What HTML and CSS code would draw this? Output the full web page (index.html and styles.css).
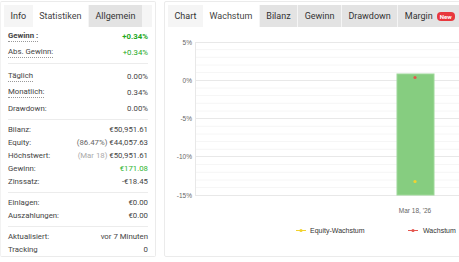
FILE: index.html
```html
<!doctype html>
<html>
<head>
    <title>Statistiken</title>
<link rel="stylesheet" href="styles.css">
</head>
<body>
    <div class="container">
        <div class="stats-panel">
            <div class="tab-bar">
                <span class="tab-title">Info</span>
                <span class="tab active">Statistiken</span>
                <span class="tab">Allgemein</span>
            </div>
            <div class="section first">
                <div class="row tall"><span class="label dotted bold">Gewinn :</span><span class="value gain bold">+0.34%</span></div>
                <div class="row tall"><span class="label dotted">Abs. Gewinn:</span><span class="value gain">+0.34%</span></div>
            </div>
            <div class="section mid">
                <div class="row tall"><span class="label dotted">Täglich</span><span class="value">0.00%</span></div>
                <div class="row tall"><span class="label dotted">Monatlich:</span><span class="value">0.34%</span></div>
                <div class="row tall"><span class="label">Drawdown:</span><span class="value">0.00%</span></div>
            </div>
            <div class="section">
                <div class="row"><span class="label">Bilanz:</span><span class="value">€50,951.61</span></div>
                <div class="row"><span class="label">Equity:</span><span class="value"><span class="note">(86.47%)</span> €44,057.63</span></div>
                <div class="row"><span class="label">Höchstwert:</span><span class="value"><span class="note light">(Mar 18)</span> €50,951.61</span></div>
                <div class="row"><span class="label">Gewinn:</span><span class="value money">€171.08</span></div>
                <div class="row"><span class="label">Zinssatz:</span><span class="value">-€18.45</span></div>
            </div>
            <div class="section">
                <div class="row"><span class="label">Einlagen:</span><span class="value">€0.00</span></div>
                <div class="row"><span class="label">Auszahlungen:</span><span class="value">€0.00</span></div>
            </div>
            <div class="section last">
                <div class="row"><span class="label">Aktualisiert:</span><span class="value">vor 7 Minuten</span></div>
                <div class="row"><span class="label">Tracking</span><span class="value">0</span></div>
            </div>
        </div>

        <div class="chart-panel">
            <div class="tab-bar">
                <span class="tab-title">Chart</span>
                <span class="tab active">Wachstum</span>
                <span class="tab">Bilanz</span>
                <span class="tab">Gewinn</span>
                <span class="tab">Drawdown</span>
                <span class="tab">Margin <span class="badge">New</span></span>
            </div>
            <svg class="chart" width="300" height="229" viewBox="0 0 300 229">
                <!-- minor grid -->
                <g stroke="#f6f6f6" stroke-width="1">
                    <line x1="30" y1="22.7" x2="300" y2="22.7"/>
                    <line x1="30" y1="30.3" x2="300" y2="30.3"/>
                    <line x1="30" y1="38" x2="300" y2="38"/>
                    <line x1="30" y1="45.6" x2="300" y2="45.6"/>
                    <line x1="30" y1="61" x2="300" y2="61"/>
                    <line x1="30" y1="68.6" x2="300" y2="68.6"/>
                    <line x1="30" y1="76.3" x2="300" y2="76.3"/>
                    <line x1="30" y1="84" x2="300" y2="84"/>
                    <line x1="30" y1="99.3" x2="300" y2="99.3"/>
                    <line x1="30" y1="107" x2="300" y2="107"/>
                    <line x1="30" y1="114.6" x2="300" y2="114.6"/>
                    <line x1="30" y1="122.3" x2="300" y2="122.3"/>
                    <line x1="30" y1="137.6" x2="300" y2="137.6"/>
                    <line x1="30" y1="145.3" x2="300" y2="145.3"/>
                    <line x1="30" y1="153" x2="300" y2="153"/>
                    <line x1="30" y1="160.6" x2="300" y2="160.6"/>
                </g>
                <!-- major grid -->
                <g stroke="#e8e8e8" stroke-width="1">
                    <line x1="30" y1="15.5" x2="300" y2="15.5"/>
                    <line x1="30" y1="53.5" x2="300" y2="53.5"/>
                    <line x1="30" y1="91.5" x2="300" y2="91.5"/>
                    <line x1="30" y1="129.5" x2="300" y2="129.5"/>
                    <line x1="30" y1="168.5" x2="300" y2="168.5"/>
                    <line x1="30.5" y1="15" x2="30.5" y2="168"/>
                </g>
                <g class="axis-label" text-anchor="end">
                    <text x="27" y="17.5">5%</text>
                    <text x="27" y="55.5">0%</text>
                    <text x="27" y="93.5">-5%</text>
                    <text x="27" y="131.5">-10%</text>
                    <text x="27" y="170.5">-15%</text>
                </g>
                <rect x="232" y="47" width="37" height="121" fill="#86cd80" stroke="#9ed899" stroke-width="1"/>
                <circle cx="250" cy="50.5" r="1.6" fill="#e5554d"/>
                <circle cx="250" cy="154.5" r="1.6" fill="#f2d22e"/>
                <text class="axis-label" x="250" y="186" text-anchor="middle">Mar 18, '26</text>
                <g class="legend">
                    <line x1="131" y1="203.5" x2="141" y2="203.5" stroke="#f2d22e" stroke-width="1"/>
                    <circle cx="136" cy="203.5" r="1.6" fill="#f2d22e"/>
                    <text x="145" y="206">Equity-Wachstum</text>
                    <line x1="243" y1="203.5" x2="253" y2="203.5" stroke="#e5554d" stroke-width="1"/>
                    <circle cx="248" cy="203.5" r="1.6" fill="#e5554d"/>
                    <text x="258" y="206">Wachstum</text>
                </g>
            </svg>
        </div>
    </div>
</body>
</html>
```

FILE: styles.css
```css
    body {
        margin: 0;
        background-color: #fff;
        font-family: Roboto, "Liberation Sans", sans-serif;
        color: #444;
        overflow: hidden;
    }
    .container {
        display: flex;
        align-items: flex-start;
        gap: 8px;
        padding-top: 1px;
        width: 470px;
    }
    .stats-panel {
        width: 148px;
        flex: none;
        border: 1px solid #ebebeb;
        border-left-color: #f2f2f2;
        padding: 3px 3px 0 3px;
        border-radius: 2px;
    }
    .chart-panel {
        width: 300px;
        flex: none;
        border: 1px solid #ebebeb;
        padding: 3px 0 0 3px;
        border-radius: 2px;
    }
    .tab-bar {
        display: flex;
        height: 22px;
        background-color: #f5f5f5;
        font-size: 9px;
        color: #333;
    }
    .tab-title,
    .tab {
        display: flex;
        align-items: center;
        padding: 0 6.5px;
        white-space: nowrap;
    }
    .tab {
        background-color: #e3e3e3;
        margin-left: 1px;
    }
    .tab.active {
        background-color: #fff;
        margin-left: 0;
        color: #444;
    }
    .badge {
        margin-left: 4px;
        background-color: #e8383d;
        color: #fff;
        font-size: 6px;
        font-weight: bold;
        border-radius: 4px;
        padding: 1px 3px;
    }
    .section {
        margin: 0 4px;
        padding: 3px 0 4px;
        border-bottom: 1px solid #ececec;
        font-size: 7.8px;
    }
    .section.first {
        padding: 1px 0 3px;
    }
    .section.mid {
        padding: 4px 0 3px;
    }
    .section.last {
        border-bottom: none;
        padding: 3px 0 0;
    }
    .row {
        display: flex;
        justify-content: space-between;
        align-items: center;
        height: 13px;
    }
    .row.tall {
        height: 16px;
    }
    .label {
        color: #444;
    }
    .dotted {
        border-bottom: 1px dotted #999;
        line-height: 10px;
    }
    .bold {
        font-weight: bold;
    }
    .value {
        color: #444;
    }
    .gain {
        color: #22a822;
    }
    .money {
        color: #2fb52f;
    }
    .note {
        color: #666;
    }
    .note.light {
        color: #aaa;
    }
    .chart {
        display: block;
        margin-left: -3px;
    }
    .axis-label {
        font-family: "Liberation Sans", Arial, sans-serif;
        font-size: 6.5px;
        fill: #666;
    }
    .legend {
        font-family: "Liberation Sans", Arial, sans-serif;
        font-size: 7px;
        fill: #333;
    }
```
